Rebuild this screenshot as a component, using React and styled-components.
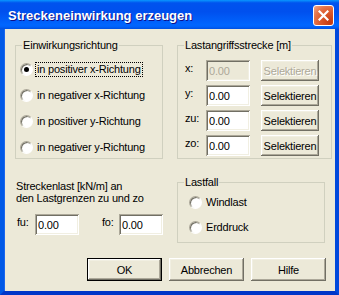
import styled, { createGlobalStyle } from "styled-components"

const GlobalStyle = createGlobalStyle`
  html, body { margin:0; padding:0; background:#ECE9D8; }
  body { font-family:"Liberation Sans", Arial, sans-serif; font-size:11px; letter-spacing:-0.2px; color:#000; }
`

const directions = [
  "in positiver x-Richtung",
  "in negativer x-Richtung",
  "in positiver y-Richtung",
  "in negativer y-Richtung",
]

const segments = [
  { label: "x:", disabled: true },
  { label: "y:" },
  { label: "zu:" },
  { label: "zo:" },
]

export default function App(){
  return (
    <>
      <GlobalStyle/>
      <Window>
        <TitleBar>
          <Title>Streckeneinwirkung erzeugen</Title>
          <CloseButton aria-label="Schließen">
            <svg width="11" height="11" viewBox="0 0 11 11">
              <path d="M1.5 1.5 L9.5 9.5 M9.5 1.5 L1.5 9.5" stroke="#fff" strokeWidth="2.2" strokeLinecap="square"/>
            </svg>
          </CloseButton>
        </TitleBar>
        <Client>
          <TopRow>
            <Group $pad="13px 4px 1px">
              <GroupTitle>Einwirkungsrichtung</GroupTitle>
              <RadioList $gap={6}>
                {directions.map((d,idx)=>(
                  <RadioRow key={idx}>
                    <Radio $checked={idx===0}/>
                    <RadioLabel $focus={idx===0}>{d}</RadioLabel>
                  </RadioRow>
                ))}
              </RadioList>
            </Group>
            <Group $pad="14px 7px 2px">
              <GroupTitle>Lastangriffsstrecke [m]</GroupTitle>
              <SegmentGrid>
                {segments.map(s=>(
                  <Segment key={s.label}>
                    <FieldLabel>{s.label}</FieldLabel>
                    <Input $w={44} disabled={s.disabled} defaultValue="0.00"/>
                    <Button $w={58} $h={21} disabled={s.disabled}>Selektieren</Button>
                  </Segment>
                ))}
              </SegmentGrid>
            </Group>
          </TopRow>
          <MiddleRow>
            <div>
              <LoadText>Streckenlast [kN/m] an<br/>den Lastgrenzen zu und zo</LoadText>
              <FieldRow>
                <FieldLabel $w={18} $ml={2}>fu:</FieldLabel>
                <Input $w={44} defaultValue="0.00"/>
                <FieldLabel $w={17} $ml={23}>fo:</FieldLabel>
                <Input $w={44} defaultValue="0.00"/>
              </FieldRow>
            </div>
            <Group $pad="9px 11px 5px" $w={148}>
              <GroupTitle>Lastfall</GroupTitle>
              <RadioList $gap={5}>
                <RadioRow>
                  <Radio/>
                  <RadioLabel>Windlast</RadioLabel>
                </RadioRow>
                <RadioRow>
                  <Radio/>
                  <RadioLabel>Erddruck</RadioLabel>
                </RadioRow>
              </RadioList>
            </Group>
          </MiddleRow>
          <ButtonRow>
            <Button $w={75} $h={23} $default>OK</Button>
            <Button $w={75} $h={23}>Abbrechen</Button>
            <Button $w={75} $h={23}>Hilfe</Button>
          </ButtonRow>
        </Client>
      </Window>
    </>
  )
}

const Window=styled.div`
    width:339px;
    height:295px;
    display:flex;
    flex-direction:column;
    overflow:hidden;
`
const TitleBar=styled.div`
    height:29px;
    flex:none;
    display:flex;
    align-items:center;
    justify-content:space-between;
    padding:0 5px 0 8px;
    box-sizing:border-box;
    background:linear-gradient(180deg,#0997ff 0%,#0053ee 10%,#0050ee 40%,#0066ff 86%,#0062fa 92%,#0050e0 100%);
`
const Title=styled.span`
    color:#fff;
    font-weight:700;
    font-size:13px;
    letter-spacing:0;
    text-shadow:1px 1px #0f1089;
    margin-top:1px;
`
const CloseButton=styled.button`
    width:21px;
    height:21px;
    margin-top:2px;
    padding:0;
    border:1px solid #fff;
    border-radius:3px;
    display:flex;
    align-items:center;
    justify-content:center;
    background:radial-gradient(circle at 85% 85%,#c53a10 0%,#dc5a2c 45%,#e5744a 70%,#f2a98a 100%);
`
const Client=styled.div`
    flex:1;
    display:flex;
    flex-direction:column;
    background:#ECE9D8;
    border-left:4px solid #0058e6;
    border-right:4px solid #0048dc;
    border-bottom:4px solid #0036c8;
    padding:16px 3px 10px 11px;
    box-shadow:inset 1px 0 #1a66ef;
`
const TopRow=styled.div`
    display:grid;
    grid-template-columns:148px 155px;
    column-gap:14px;
`
const MiddleRow=styled.div`
    display:grid;
    grid-template-columns:148px 155px;
    column-gap:14px;
    align-items:start;
    margin-top:23px;
`
const Group=styled.div`
    position:relative;
    border:1px solid #D0D0BF;
    padding:${p=>p.$pad};
    ${p=>p.$w ? `width:${p.$w}px;` : ""}
    box-sizing:border-box;
`
const GroupTitle=styled.span`
    position:absolute;
    top:-7px;
    left:6px;
    padding:0 1px;
    line-height:13px;
    background:#ECE9D8;
`
const RadioList=styled.div`
    display:flex;
    flex-direction:column;
    gap:${p=>p.$gap}px;
`
const RadioRow=styled.div`
    height:20px;
    display:flex;
    align-items:center;
    gap:2px;
`
const Radio=styled.span`
    position:relative;
    width:13px;
    height:13px;
    box-sizing:border-box;
    border-radius:50%;
    border:1px solid;
    border-color:#ACA899 #fff #fff #ACA899;
    background:radial-gradient(circle at 60% 60%,#fff 45%,#e6e4da 100%);
    box-shadow:inset 1px 1px #716F64;
    &::after{
        content:"";
        display:${p=>p.$checked ? "block" : "none"};
        position:absolute;
        left:3px;
        top:3px;
        width:5px;
        height:5px;
        border-radius:50%;
        background:#000;
    }
`
const RadioLabel=styled.span`
    line-height:13px;
    padding:0 1px;
    border:1px dotted ${p=>p.$focus ? "#000" : "transparent"};
`
const SegmentGrid=styled.div`
    display:flex;
    flex-direction:column;
    gap:4px;
`
const Segment=styled.div`
    display:grid;
    grid-template-columns:21px 44px 58px;
    column-gap:0;
    align-items:start;
    & > button{ margin-left:11px; }
`
const FieldLabel=styled.span`
    line-height:13px;
    padding-top:2px;
    ${p=>p.$w ? `width:${p.$w}px;` : ""}
    ${p=>p.$ml ? `margin-left:${p.$ml}px;` : ""}
    flex:none;
`
const Input=styled.input`
    width:${p=>p.$w}px;
    height:21px;
    box-sizing:border-box;
    border:none;
    margin:0;
    padding:0 3px;
    font:11px "Liberation Sans", Arial, sans-serif;
    letter-spacing:-0.2px;
    color:#000;
    background:#fff;
    box-shadow:inset 1px 1px #ACA899, inset -1px -1px #fff, inset 2px 2px #716F64, inset -2px -2px #F1EFE2;
    outline:none;
    &:disabled{
        background:#ECE9D8;
        color:#ACA899;
    }
`
const LoadText=styled.div`
    margin-top:-2px;
    line-height:12px;
    padding-left:1px;
`
const FieldRow=styled.div`
    display:flex;
    align-items:flex-start;
    margin-top:10px;
`
const ButtonRow=styled.div`
    display:flex;
    justify-content:flex-end;
    gap:7px;
    margin-top:15px;
    margin-right:6px;
`
const Button=styled.button`
    width:${p=>p.$w}px;
    height:${p=>p.$h}px;
    box-sizing:border-box;
    margin:0;
    padding:0;
    font:11px "Liberation Sans", Arial, sans-serif;
    letter-spacing:-0.2px;
    color:#000;
    background:#ECE9D8;
    border:${p=>p.$default ? "1px solid #000" : "none"};
    box-shadow:inset -1px -1px #716F64, inset 1px 1px #fff, inset -2px -2px #ACA899, inset 2px 2px #F1EFE2;
    &:disabled{
        color:#ACA899;
        text-shadow:1px 1px #fff;
    }
`
